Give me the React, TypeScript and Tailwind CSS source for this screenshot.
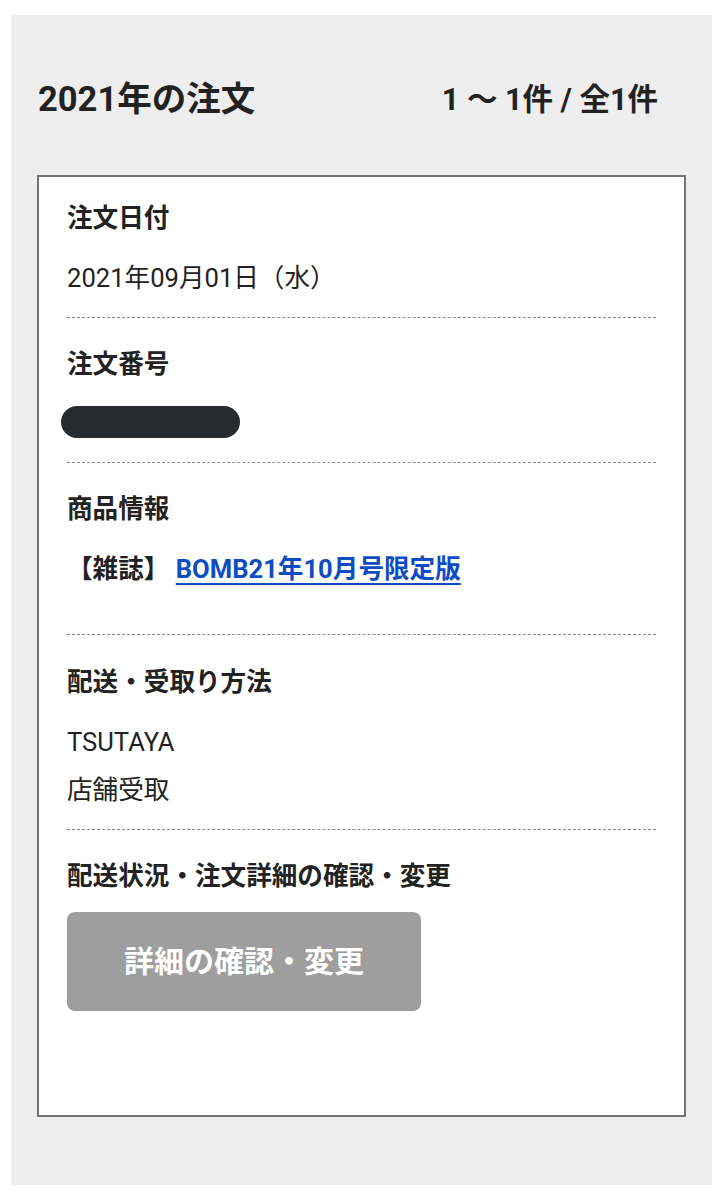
import React from "react";

const font = { fontFamily: 'Roboto, "Noto Sans CJK JP", sans-serif' };

function Label({ children }: { children: React.ReactNode }) {
  return <div className="text-[25.6px] font-bold leading-[36px] text-[#222]">{children}</div>;
}

export default function App() {
  return (
    <div className="min-h-[1200px] bg-white" style={font}>
      <div className="pt-[15px] pl-[11px] pr-[14px] pb-[16px]">
        <div className="bg-[#eeeeee] px-[26px] pb-[68px]">
          <div className="flex items-center justify-between h-[160px] pt-[10px] pr-[28px]">
            <h1 className="text-[34.5px] font-bold text-[#222] pl-[1px]">2021年の注文</h1>
            <div className="text-[30.5px] font-bold text-[#222]">1 ～ 1件 / 全1件</div>
          </div>
          <div className="bg-white border-2 border-[#737373] px-[28px] pb-[104px]">
            <div className="pt-[23px] pb-[21px] border-b border-dashed border-[#8a8a8a]">
              <Label>注文日付</Label>
              <div className="mt-[24px] text-[25.6px] leading-[36px] text-[#222]">2021年09月01日（水）</div>
            </div>
            <div className="pt-[28px] pb-[24px] border-b border-dashed border-[#8a8a8a]">
              <Label>注文番号</Label>
              <div className="mt-[24px] h-[32px] w-[179px] -ml-[6px] rounded-full bg-[#272c30]" />
            </div>
            <div className="pt-[28px] pb-[47px] border-b border-dashed border-[#8a8a8a]">
              <Label>商品情報</Label>
              <div className="mt-[24px] text-[25.6px] leading-[36px] font-bold text-[#222]">
                【雑誌】 <a href="#" className="text-[#0d4cc2] underline decoration-2 underline-offset-[5px]">BOMB21年10月号限定版</a>
              </div>
            </div>
            <div className="pt-[29px] pb-[21px] border-b border-dashed border-[#8a8a8a]">
              <Label>配送・受取り方法</Label>
              <div className="mt-[24px] flex flex-col gap-[12px] text-[25.6px] leading-[36px] text-[#222]">
                <div>TSUTAYA</div>
                <div>店舗受取</div>
              </div>
            </div>
            <div className="pt-[28px]">
              <Label>配送状況・注文詳細の確認・変更</Label>
              <button className="mt-[18px] flex h-[99px] w-[354px] items-center justify-center rounded-[8px] bg-[#9e9e9e] text-[30px] font-bold text-white">
                詳細の確認・変更
              </button>
            </div>
          </div>
        </div>
      </div>
    </div>
  );
}
